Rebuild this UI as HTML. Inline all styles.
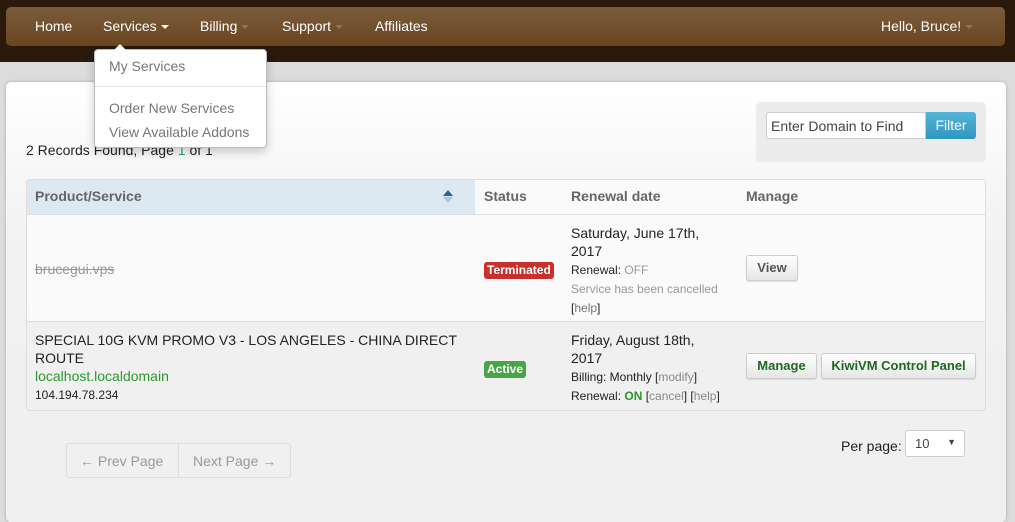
<!DOCTYPE html>
<html><head><meta charset="utf-8"><style>
*{box-sizing:border-box}
body{margin:0;width:1015px;height:512px;overflow:hidden;background:#dcdcdc;font-family:"Liberation Sans",Arial,sans-serif;font-size:14px;color:#333;position:relative}
.top{position:absolute;left:0;top:0;width:1015px;height:62px;background:#2b1a0c}
.nav{position:absolute;left:6px;top:7px;width:999px;height:39px;border-radius:5px;background:linear-gradient(#7b5b3b,#69461f)}
.nav span{position:absolute;top:11px;color:#fff;font-size:14px}
.caret{display:inline-block;width:0;height:0;border-left:4px solid transparent;border-right:4px solid transparent;border-top:4px solid #fff;vertical-align:middle;margin-left:4px}
.caret.g{border-top-color:#8a7560}
.panel{position:absolute;left:6px;top:82px;width:1000px;height:440px;border-radius:5px;background:linear-gradient(#fff 0px,#f3f3f3 140px,#f0f0f0 300px);box-shadow:0 0 3px rgba(0,0,0,.25)}
.abs{position:absolute}
.dd{position:absolute;left:94px;top:49px;width:173px;height:99px;background:#fff;border:1px solid #bbb;border-radius:4px;box-shadow:0 4px 10px rgba(0,0,0,.2)}
.dd div{position:absolute;left:14px;color:#777;font-size:14px}
.tbl{position:absolute;left:26px;top:179px;width:960px;height:232px;border:1px solid #ddd;border-radius:4px;overflow:hidden;background:#fafafa}
.th{position:absolute;top:8px;font-weight:bold;color:#666;font-size:14px}
.lbl{display:inline-block;color:#fff;font-weight:bold;font-size:12px;padding:1px 3px 2px;border-radius:3px}
.btn{position:absolute;border:1px solid #ccc;border-radius:3px;background:linear-gradient(#fff,#e6e6e6);font-weight:bold;font-size:13px;text-align:center;line-height:24px;box-shadow:0 1px 1px rgba(0,0,0,.1)}
.sm{font-size:12px}
</style></head><body>
<div class="top"></div>
<div class="nav">
<span style="left:29px">Home</span>
<span style="left:97px">Services<i class="caret"></i></span>
<span style="left:194px">Billing<i class="caret g"></i></span>
<span style="left:276px">Support<i class="caret g"></i></span>
<span style="left:369px">Affiliates</span>
<span style="left:875px">Hello, Bruce!<i class="caret g"></i></span>
</div>
<div class="panel"></div>
<div class="abs" style="left:26px;top:142px;font-size:14px;color:#222">2 Records Found, Page <span style="color:#2a6">1</span> of 1</div>
<div class="abs" style="left:756px;top:102px;width:230px;height:60px;background:#ececec;border-radius:5px"></div>
<div class="abs" style="left:766px;top:112px;width:160px;height:27px;background:#fff;border:1px solid #ccc;border-radius:3px 0 0 3px;padding:5px 4px;font-size:14px;color:#444">Enter Domain to Find</div>
<div class="abs" style="left:926px;top:112px;width:50px;height:27px;background:linear-gradient(#55b4d8,#2f96c0);border-radius:0 3px 3px 0;color:#fff;font-size:14px;text-align:center;line-height:27px">Filter</div>
<div class="dd">
<div style="top:8px">My Services</div>
<div style="top:36px;left:0;width:171px;height:1px;background:#e5e5e5"></div>
<div style="top:50px">Order New Services</div>
<div style="top:74px">View Available Addons</div>
</div>
<div class="abs" style="left:114px;top:44px;width:0;height:0;border-left:6px solid transparent;border-right:6px solid transparent;border-bottom:6px solid #fff"></div>
<div class="tbl">
<div class="abs" style="left:0;top:0;width:448px;height:35px;background:#dce8f2"></div>
<div class="abs" style="left:448px;top:0;width:512px;height:35px;background:#fafafa"></div>
<div class="abs" style="left:0;top:34px;width:960px;height:1px;background:#ddd"></div>
<div class="th" style="left:8px">Product/Service</div>
<div class="abs" style="left:416px;top:10px;width:0;height:0;border-left:5px solid transparent;border-right:5px solid transparent;border-bottom:6px solid #2a5f9a"></div>
<div class="abs" style="left:416px;top:17px;width:0;height:0;border-left:5px solid transparent;border-right:5px solid transparent;border-top:6px solid #a9c4e0"></div>
<div class="th" style="left:457px">Status</div>
<div class="th" style="left:544px">Renewal date</div>
<div class="th" style="left:719px">Manage</div>
<div class="abs" style="left:8px;top:81px;color:#999;text-decoration:line-through;font-size:14px">brucegui.vps</div>
<div class="abs" style="left:457px;top:81px"><span class="lbl" style="background:#c9302c">Terminated</span></div>
<div class="abs" style="left:544px;top:44px;line-height:18px;font-size:14px;color:#222">Saturday, June 17th,<br>2017<br><span class="sm">Renewal: <span style="color:#999">OFF</span></span><br><span class="sm" style="color:#999">Service has been cancelled</span><br><span class="sm">[<span style="color:#777">help</span>]</span></div>
<div class="btn" style="left:719px;top:75px;width:52px;color:#555">View</div>
<div class="abs" style="left:0;top:141px;width:960px;height:91px;background:#f0f0f0;border-top:1px solid #ddd"></div>
<div class="abs" style="left:8px;top:151px;line-height:18px;font-size:14px;color:#222">SPECIAL 10G KVM PROMO V3 - LOS ANGELES - CHINA DIRECT<br>ROUTE<br><span style="color:#2a9a2a">localhost.localdomain</span><br><span class="sm">104.194.78.234</span></div>
<div class="abs" style="left:457px;top:180px"><span class="lbl" style="background:#47a447">Active</span></div>
<div class="abs" style="left:544px;top:151px;line-height:18px;font-size:14px;color:#222">Friday, August 18th,<br>2017<br><span class="sm">Billing: Monthly [<span style="color:#888">modify</span>]</span><br><span class="sm">Renewal: <b style="color:#2a9a2a">ON</b> [<span style="color:#888">cancel</span>] [<span style="color:#888">help</span>]</span></div>
<div class="btn" style="left:719px;top:173px;width:71px;color:#1f6a1f">Manage</div>
<div class="btn" style="left:794px;top:173px;width:155px;color:#1f6a1f">KiwiVM Control Panel</div>
</div>
<div class="abs" style="left:66px;top:443px;width:225px;height:35px;border:1px solid #ddd;border-radius:3px;background:#f0f0f0;color:#999;font-size:14px">
<span class="abs" style="left:13px;top:9px">← Prev Page</span>
<span class="abs" style="left:111px;top:0;width:1px;height:33px;background:#ddd"></span>
<span class="abs" style="left:126px;top:9px">Next Page →</span>
</div>
<div class="abs" style="left:841px;top:438px;font-size:14px;color:#222">Per page:</div>
<div class="abs" style="left:905px;top:430px;width:60px;height:27px;background:#fff;border:1px solid #ccc;border-radius:3px;font-size:13px;color:#444;padding:5px 9px">10<span class="abs" style="right:8px;top:6px;font-size:9px">▼</span></div>
</body></html>
